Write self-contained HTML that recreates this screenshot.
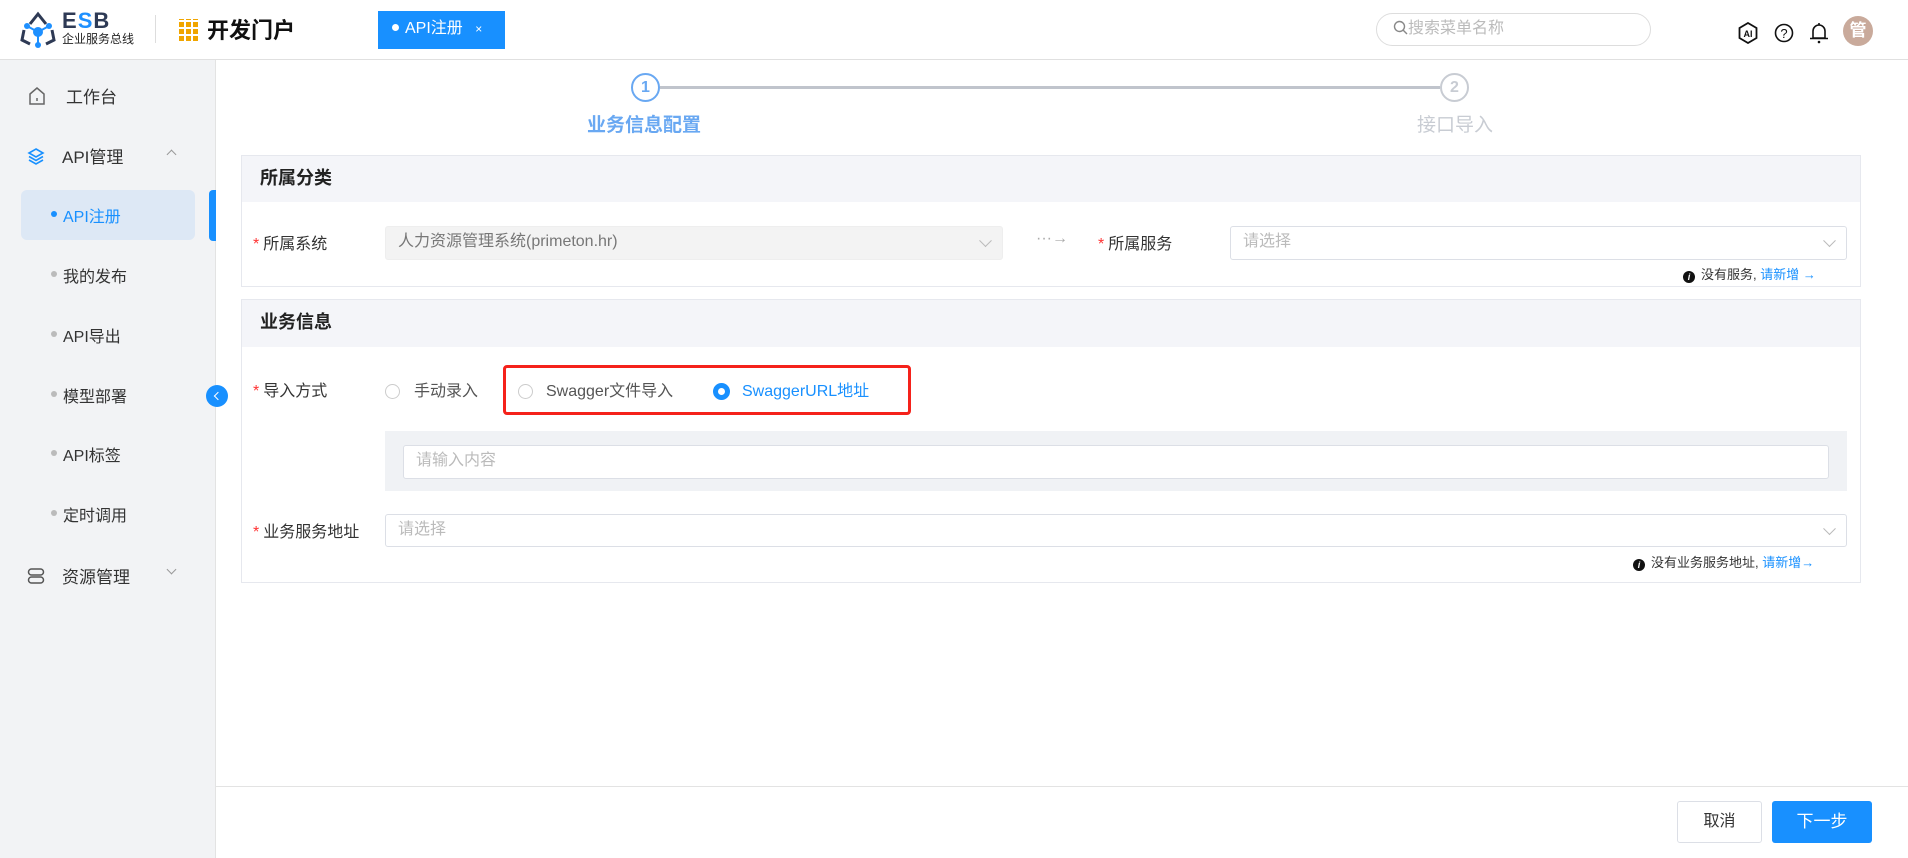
<!DOCTYPE html>
<html><head><meta charset="utf-8"><style>
*{box-sizing:border-box;margin:0;padding:0}
body{width:1908px;height:858px;overflow:hidden;background:#fff;font-family:"Liberation Sans","Noto Sans CJK SC",sans-serif;color:#333;font-size:16px;position:relative}
.a{position:absolute}
.hdr{left:0;top:0;width:1908px;height:60px;border-bottom:1px solid #e0e0e0;background:#fff}
.side{left:0;top:60px;width:216px;height:798px;background:#f2f3f5;border-right:1px solid #e3e3e3}
.mi{position:absolute;left:0;width:216px;font-size:17px;color:#333}
.sub{position:absolute;left:48px;font-size:16px;color:#333}
.sub::before{content:"";position:absolute;left:-12px;top:8px;width:6px;height:6px;border-radius:3px;background:#bbb}
.sub.on::before{background:#1890ff}
.sec{border:1px solid #e6e8ee;background:#fff}
.sh{background:#f4f5f9;font-weight:bold;font-size:18px;padding-left:18px;color:#222}
.lbl{font-size:16px;color:#333}
.lbl b{color:#f33;font-weight:normal;margin-right:4px}
.sel{border:1px solid #dcdfe6;border-radius:3px;background:#fff;color:#bbb;font-size:16px;padding-left:12px}
.chev{position:absolute;right:12px;top:50%;width:9px;height:9px;border-right:1.5px solid #bbb;border-bottom:1.5px solid #bbb;transform:translateY(-75%) rotate(45deg)}
.hint{font-size:13px;color:#333}
.hint span{color:#1890ff}
.ico{display:inline-block;width:12px;height:12px;border-radius:6px;background:#111;color:#fff;font-size:9px;text-align:center;line-height:12px;font-weight:bold;vertical-align:-1px;margin-right:6px;font-style:italic}
.radio{width:15px;height:15px;border:1px solid #ccc;border-radius:50%;background:#fff}
</style></head><body>
<div class="a hdr"></div>
<svg class="a" style="left:18px;top:10px" width="40" height="38" viewBox="0 0 40 38"><g fill="none" stroke="#2e3a55" stroke-width="3"><path d="M12 14 L20 4 L28 14"/><path d="M6 20 L4 30 L12 34"/><path d="M34 20 L36 30 L28 34"/></g><circle cx="20" cy="22" r="5" fill="#1e90ff"/><g stroke="#1e90ff" stroke-width="2"><line x1="20" y1="22" x2="9" y2="16"/><line x1="20" y1="22" x2="31" y2="16"/><line x1="20" y1="22" x2="20" y2="34"/></g><circle cx="9" cy="16" r="3" fill="#1e90ff"/><circle cx="31" cy="16" r="3" fill="#1e90ff"/><circle cx="20" cy="35" r="3" fill="#1e90ff"/></svg>
<div class="a" style="left:62px;top:8px;font-size:22px;font-weight:900;color:#2e3a55;letter-spacing:1px">E<span style="color:#1e90ff">S</span>B</div>
<div class="a" style="left:62px;top:30px;font-size:12px;color:#222">企业服务总线</div>
<div class="a" style="left:155px;top:15px;width:1px;height:28px;background:#ddd"></div>
<div class="a" style="left:179px;top:19px;width:19px;height:22px;background:repeating-linear-gradient(90deg,#f0a500 0 5px,transparent 5px 7px),#fff;"></div>
<div class="a" style="left:179px;top:19px;width:19px;height:22px;background:repeating-linear-gradient(0deg,transparent 0 5px,#fff 5px 7px)"></div>
<div class="a" style="left:207px;top:13px;font-size:22px;font-weight:bold;color:#111">开发门户</div>
<div class="a" style="left:378px;top:11px;width:127px;height:38px;background:#1890ff;color:#fff;font-size:16px;line-height:36px;padding-left:14px"><span style="display:inline-block;width:7px;height:7px;border-radius:4px;background:#fff;vertical-align:2px;margin-right:6px"></span>API注册 <span style="font-size:12px;margin-left:8px">×</span></div>
<div class="a" style="left:1376px;top:13px;width:275px;height:33px;border:1px solid #ddd;border-radius:17px;color:#bbb;font-size:16px;line-height:29px;padding-left:16px"><svg width="15" height="15" viewBox="0 0 15 15" style="vertical-align:-2px"><circle cx="6.5" cy="6.5" r="5" fill="none" stroke="#888" stroke-width="1.4"/><line x1="10" y1="10" x2="14" y2="14" stroke="#888" stroke-width="1.4"/></svg>搜索菜单名称</div>
<svg class="a" style="left:1738px;top:22px" width="20" height="22" viewBox="0 0 20 22"><path d="M10 1 L18.5 6 V16 L10 21 L1.5 16 V6 Z" fill="none" stroke="#111" stroke-width="1.8"/><text x="10" y="15" font-size="9" font-weight="bold" text-anchor="middle" font-family="Liberation Sans" fill="#111">AI</text></svg>
<svg class="a" style="left:1774px;top:23px" width="20" height="20"><circle cx="10" cy="10" r="8.5" fill="none" stroke="#111" stroke-width="1.6"/><text x="10" y="15" font-size="13" text-anchor="middle" font-family="Liberation Sans" fill="#111">?</text></svg>
<svg class="a" style="left:1809px;top:21px" width="20" height="24"><path d="M4 17 V10 A6 6 0 0 1 16 10 V17 Z" fill="none" stroke="#111" stroke-width="1.6"/><line x1="1" y1="17.5" x2="19" y2="17.5" stroke="#111" stroke-width="1.6"/><circle cx="10" cy="21" r="1.3" fill="#111"/><line x1="10" y1="2" x2="10" y2="4" stroke="#111" stroke-width="1.6"/></svg>
<div class="a" style="left:1843px;top:16px;width:30px;height:30px;border-radius:15px;background:#c9aa9b;color:#fff;font-size:17px;text-align:center;line-height:30px;font-weight:bold">管</div>

<div class="a side"></div>
<svg class="a" style="left:28px;top:86px" width="18" height="20"><path d="M2 8 L9 2 L16 8 V18 H2 Z" fill="none" stroke="#666" stroke-width="1.5"/><line x1="9" y1="12" x2="9" y2="15" stroke="#666" stroke-width="1.5"/></svg>
<div class="mi" style="top:83px;left:66px">工作台</div>
<svg class="a" style="left:27px;top:147px" width="18" height="18"><g fill="none" stroke="#1890ff" stroke-width="1.6"><path d="M9 2 L16 6 L9 10 L2 6 Z"/><path d="M2 9.5 L9 13.5 L16 9.5"/><path d="M2 13 L9 17 L16 13"/></g></svg>
<div class="mi" style="top:143px;left:62px">API管理</div>
<div class="a" style="left:168px;top:151px;width:7px;height:7px;border-left:1.3px solid #999;border-top:1.3px solid #999;transform:rotate(45deg)"></div>
<div class="a" style="left:21px;top:190px;width:174px;height:50px;background:#dde8f5;border-radius:6px"></div>
<div class="a" style="left:209px;top:190px;width:7px;height:51px;background:#1890ff;border-radius:4px 0 0 4px"></div>
<div class="sub on" style="top:203px;left:63px;color:#1890ff">API注册</div>
<div class="sub" style="top:263px;left:63px">我的发布</div>
<div class="sub" style="top:323px;left:63px">API导出</div>
<div class="sub" style="top:383px;left:63px">模型部署</div>
<div class="sub" style="top:442px;left:63px">API标签</div>
<div class="sub" style="top:502px;left:63px">定时调用</div>
<svg class="a" style="left:27px;top:567px" width="18" height="18"><g fill="none" stroke="#555" stroke-width="1.5"><rect x="1.5" y="2" width="15" height="6" rx="3"/><rect x="1.5" y="10" width="15" height="6" rx="3"/></g></svg>
<div class="mi" style="top:563px;left:62px">资源管理</div>
<div class="a" style="left:168px;top:566px;width:7px;height:7px;border-right:1.3px solid #999;border-bottom:1.3px solid #999;transform:rotate(45deg)"></div>
<div class="a" style="left:206px;top:385px;width:22px;height:22px;border-radius:11px;background:#1890ff"></div>
<div class="a" style="left:215px;top:393px;width:6px;height:6px;border-left:1.5px solid #fff;border-bottom:1.5px solid #fff;transform:rotate(45deg)"></div>

<div class="a" style="left:660px;top:86px;width:780px;height:3px;background:#c0c4cc"></div>
<div class="a" style="left:631px;top:73px;width:29px;height:29px;border:2px solid #69a8f2;border-radius:50%;background:#fff;color:#69a8f2;font-weight:bold;text-align:center;line-height:25px;font-size:16px">1</div>
<div class="a" style="left:1440px;top:73px;width:29px;height:29px;border:2px solid #c8ccd3;border-radius:50%;background:#fff;color:#c8ccd3;font-weight:bold;text-align:center;line-height:25px;font-size:16px">2</div>
<div class="a" style="left:587px;top:110px;font-size:19px;font-weight:bold;color:#69a8f2">业务信息配置</div>
<div class="a" style="left:1417px;top:110px;font-size:19px;color:#c8ccd3">接口导入</div>

<div class="a sec" style="left:241px;top:155px;width:1620px;height:132px"></div>
<div class="a sh" style="left:242px;top:156px;width:1618px;height:46px;line-height:44px">所属分类</div>
<div class="a lbl" style="left:253px;top:230px"><b>*</b>所属系统</div>
<div class="a sel" style="left:385px;top:226px;width:618px;height:34px;line-height:30px;background:#f3f3f3;border-color:#eee;color:#777">人力资源管理系统(primeton.hr)<i class="chev"></i></div>
<div class="a" style="left:1036px;top:230px;color:#aaa;font-size:16px">···→</div>
<div class="a lbl" style="left:1098px;top:230px"><b>*</b>所属服务</div>
<div class="a sel" style="left:1230px;top:226px;width:617px;height:34px;line-height:30px">请选择<i class="chev"></i></div>
<div class="a hint" style="left:1683px;top:264px"><i class="ico">i</i>没有服务, <span>请新增 →</span></div>

<div class="a sec" style="left:241px;top:299px;width:1620px;height:284px"></div>
<div class="a sh" style="left:242px;top:300px;width:1618px;height:47px;line-height:45px">业务信息</div>
<div class="a lbl" style="left:253px;top:377px"><b>*</b>导入方式</div>
<div class="a radio" style="left:385px;top:384px"></div>
<div class="a lbl" style="left:414px;top:377px;color:#555">手动录入</div>
<div class="a" style="left:503px;top:365px;width:408px;height:50px;border:3px solid #f5221b;border-radius:4px"></div>
<div class="a radio" style="left:518px;top:384px"></div>
<div class="a lbl" style="left:546px;top:377px;color:#555">Swagger文件导入</div>
<div class="a radio" style="left:713px;top:383px;border:5px solid #1890ff;width:17px;height:17px"></div>
<div class="a lbl" style="left:742px;top:377px;color:#1890ff">SwaggerURL地址</div>
<div class="a" style="left:385px;top:431px;width:1462px;height:60px;background:#f0f2f5"></div>
<div class="a sel" style="left:403px;top:445px;width:1426px;height:34px;line-height:30px">请输入内容</div>
<div class="a lbl" style="left:253px;top:518px"><b>*</b>业务服务地址</div>
<div class="a sel" style="left:385px;top:514px;width:1462px;height:33px;line-height:29px">请选择<i class="chev"></i></div>
<div class="a hint" style="left:1633px;top:552px"><i class="ico">i</i>没有业务服务地址, <span>请新增→</span></div>

<div class="a" style="left:216px;top:786px;width:1692px;height:1px;background:#e3e3e3"></div>
<div class="a" style="left:1677px;top:801px;width:85px;height:42px;border:1px solid #dcdfe6;border-radius:3px;text-align:center;line-height:40px;font-size:16px;color:#333">取消</div>
<div class="a" style="left:1772px;top:801px;width:100px;height:42px;background:#1890ff;border-radius:3px;text-align:center;line-height:42px;font-size:17px;color:#fff">下一步</div>
</body></html>
